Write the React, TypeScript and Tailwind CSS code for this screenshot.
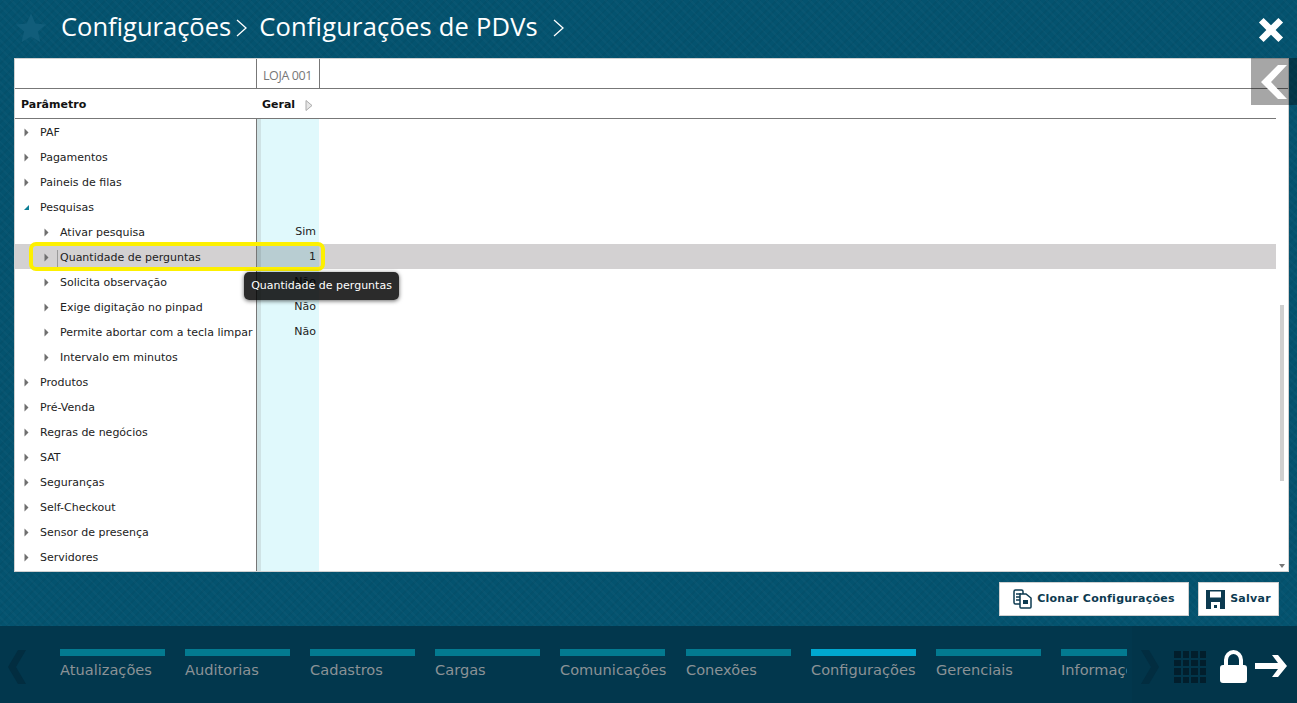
import React from 'react';

const pattern =
  'bg-[#04536f] bg-[repeating-linear-gradient(45deg,rgba(255,255,255,0.02)_0_2px,transparent_2px_6px),repeating-linear-gradient(-45deg,rgba(0,0,0,0.04)_0_2px,transparent_2px_6px)]';

type Row = { label: string; level: number; open?: boolean; value?: string; selected?: boolean };

const rows: Row[] = [
  { label: 'PAF', level: 0 },
  { label: 'Pagamentos', level: 0 },
  { label: 'Paineis de filas', level: 0 },
  { label: 'Pesquisas', level: 0, open: true },
  { label: 'Ativar pesquisa', level: 1, value: 'Sim' },
  { label: 'Quantidade de perguntas', level: 1, value: '1', selected: true },
  { label: 'Solicita observação', level: 1, value: 'Não' },
  { label: 'Exige digitação no pinpad', level: 1, value: 'Não' },
  { label: 'Permite abortar com a tecla limpar', level: 1, value: 'Não' },
  { label: 'Intervalo em minutos', level: 1 },
  { label: 'Produtos', level: 0 },
  { label: 'Pré-Venda', level: 0 },
  { label: 'Regras de negócios', level: 0 },
  { label: 'SAT', level: 0 },
  { label: 'Seguranças', level: 0 },
  { label: 'Self-Checkout', level: 0 },
  { label: 'Sensor de presença', level: 0 },
  { label: 'Servidores', level: 0 },
];

const navItems = [
  'Atualizações',
  'Auditorias',
  'Cadastros',
  'Cargas',
  'Comunicações',
  'Conexões',
  'Configurações',
  'Gerenciais',
];

const Caret = ({ open }: { open?: boolean }) =>
  open ? (
    <svg width="7" height="7" viewBox="0 0 7 7" className="shrink-0">
      <path d="M6 1v5H1z" fill="#0b7f96" />
    </svg>
  ) : (
    <svg width="7" height="9" viewBox="0 0 7 9" className="shrink-0">
      <path d="M1.5 0.5l4 4-4 4z" fill="#6f6f6f" />
    </svg>
  );

const TreeRow = ({ row }: { row: Row }) => (
  <div className={`flex h-[25px] w-[1261px] items-center ${row.selected ? 'bg-[#d3d1d2]' : ''}`}>
    <div
      className={`flex w-[241px] shrink-0 items-center overflow-hidden whitespace-nowrap ${
        row.level === 1 ? 'pl-[28px]' : 'pl-[8px]'
      }`}
    >
      <div className="mt-[2px] flex w-[17px] shrink-0 items-center">
        <Caret open={row.open} />
      </div>
      <span className={`mt-[4px] ${row.selected ? 'border-l border-[#9a9a9a] pl-[2px] -ml-[3px]' : ''}`}>{row.label}</span>
    </div>
    <div className={`h-full w-[5px] shrink-0 border-l border-[#777] ${row.selected ? 'bg-[#a9bcc0]' : 'bg-[#cfe3e5]'}`} />
    <div
      className={`flex h-full w-[58px] shrink-0 items-center justify-end pr-[3px] pt-[2px] ${
        row.selected ? 'bg-[#b8cdd2]' : 'bg-[#e0f9fc]'
      }`}
    >
      {row.value}
    </div>
  </div>
);

export default function App() {
  return (
    <div className={`flex h-[703px] w-[1297px] flex-col overflow-hidden font-['Open_Sans',sans-serif] ${pattern}`}>
      {/* Title */}
      <header className="relative flex h-[58px] shrink-0 items-center pb-[2px]">
        <svg width="32" height="32" viewBox="0 0 24 24" className="ml-[15px] shrink-0" fill="#115d7a">
          <path d="M12 1l3.2 7.600 8.200.7-6.200 5.400 1.900 8L12 18.400 4.900 22.700l1.900-8L.6 9.300l8.200-.7z" />
        </svg>
        <span className="mb-[2px] ml-[14px] text-[25.5px] leading-none text-white">Configurações</span>
        <svg width="14" height="20" viewBox="0 0 14 20" className="ml-[4px]" fill="none" stroke="#fff" strokeWidth="1.300">
          <path d="M2 2l9 8-9 8" />
        </svg>
        <span className="mb-[2px] ml-[10px] text-[25.5px] leading-none tracking-[0.2px] text-white">Configurações de PDVs</span>
        <svg width="14" height="20" viewBox="0 0 14 20" className="ml-[14px]" fill="none" stroke="#fff" strokeWidth="1.300">
          <path d="M2 2l9 8-9 8" />
        </svg>
        <svg width="26" height="26" viewBox="0 0 28 28" className="absolute right-[13px] top-[17px]" fill="#fff">
          <path d="M6 1l8 8 8-8 5 5-8 8 8 8-5 5-8-8-8 8-5-5 8-8-8-8z" />
        </svg>
      </header>

      {/* Table panel */}
      <main className="relative mx-[14px] h-[514px] w-[1275px] shrink-0 overflow-hidden border border-[#d0d0d0] bg-white font-['DejaVu_Sans',sans-serif] text-[11px] text-[#222]">
        <div className="flex h-[30px] border-b border-[#777]">
          <div className="w-[242px] shrink-0 border-r border-[#777]" />
          <div className="flex w-[63px] shrink-0 items-center justify-center border-r border-[#777] pr-[1px] pt-[5px] font-['Open_Sans',sans-serif] text-[12.5px] tracking-[-0.4px] text-[#777]">
            LOJA 001
          </div>
        </div>
        <div className="flex h-[30px] w-[1261px] items-center border-b border-[#777] pt-[3px] font-bold text-[#111]">
          <div className="w-[241px] shrink-0 pl-[6px]">Parâmetro</div>
          <div className="flex items-center pl-[6px]">
            Geral
            <svg width="8" height="11" viewBox="0 0 8 11" className="ml-[10px]">
              <path d="M1 .5l6 5-6 5z" fill="#e6e6e6" stroke="#aaa" />
            </svg>
          </div>
        </div>
        <div className="flex flex-col">
          {rows.map((row) => (
            <TreeRow key={row.label} row={row} />
          ))}
          <div className="flex h-[4px] w-[1261px]">
            <div className="w-[241px] shrink-0" />
            <div className="w-[5px] shrink-0 border-l border-[#777] bg-[#cfe3e5]" />
            <div className="w-[58px] shrink-0 bg-[#e0f9fc]" />
          </div>
        </div>

        {/* scrollbar */}
        <div className="absolute right-[4px] top-[246px] h-[176px] w-[4px] bg-[#cfcfcf]" />
        <div className="absolute right-[3px] top-[505px] h-0 w-0 border-x-[3px] border-t-[4px] border-x-transparent border-t-[#777]" />

        {/* highlight + tooltip */}
        <div className="absolute left-[14px] top-[183px] h-[29px] w-[296px] rounded-[7px] border-4 border-[#fdf000]" />
        <div className="absolute left-[229px] top-[213px] flex h-[28px] w-[155px] items-center justify-center rounded-[5px] bg-black/83 text-white shadow-[0_1px_4px_rgba(0,0,0,0.6)]">
          Quantidade de perguntas
        </div>
      </main>

      {/* Side toggle */}
      <div className="absolute left-[1251px] top-[58px] flex h-[47px] w-[46px] bg-black/35">
        <div className="flex h-full w-[38px] items-center justify-end pr-[2px]">
          <svg width="26" height="34" viewBox="0 0 26 34" fill="#fff">
            <path d="M17 0h9L10 17l16 17h-9L0 17z" />
          </svg>
        </div>
      </div>

      {/* Actions */}
      <div className="flex h-[54px] shrink-0 items-center justify-end gap-[9px] pr-[18px] font-['DejaVu_Sans',sans-serif] text-[11px] font-bold tracking-[0.25px] text-[#0c3a50]">
        <button className="flex h-[34px] w-[190px] items-center justify-center gap-[5px] border border-[#d0d0d0] bg-white">
          <svg width="19" height="20" viewBox="0 0 19 20" fill="none" stroke="#0c3a50" strokeWidth="1.500">
            <rect x="1" y="1" width="9" height="14" rx="1.500" />
            <path d="M3 5h5M3 8h5M3 11h5" />
            <path d="M7 5h6l5 4v9a1 1 0 0 1-1 1H8a1 1 0 0 1-1-1z" fill="#fff" />
            <path d="M10 11h5v4h-5z" fill="#0c3a50" stroke="none" />
          </svg>
          Clonar Configurações
        </button>
        <button className="flex h-[34px] w-[81px] items-center justify-center gap-[5px] border border-[#d0d0d0] bg-white">
          <svg width="19" height="19" viewBox="0 0 19 19" fill="#0c3a50">
            <path d="M0 0h19v19H0z" />
            <path d="M4 1.500h11v6H4z" fill="#fff" />
            <path d="M5 12h9v7H5z" fill="#fff" />
            <path d="M8 15h3v3H8z" fill="#0c3a50" />
          </svg>
          Salvar
        </button>
      </div>

      {/* Bottom menu */}
      <nav className="flex h-[77px] shrink-0 bg-[#02374d] font-['DejaVu_Sans',sans-serif] text-[14.6px] text-[#8b9296]">
        <div className="flex w-[60px] shrink-0 items-start pl-[8px] pt-[24px]">
          <svg width="18" height="34" viewBox="0 0 18 34" fill="#022d40">
            <path d="M10 0h8L8 17l10 17h-8L0 17z" />
          </svg>
        </div>
        <div className="flex w-[1072px] shrink-0 gap-[20px] overflow-hidden pt-[23px]">
          {navItems.map((item) => (
            <div key={item} className={`w-[105px] shrink-0 ${item === 'Comunicações' ? 'mr-[1px]' : ''}`}>
              <div className={`h-[7px] ${item === 'Configurações' ? 'bg-[#00a8d0]' : 'bg-[#037a90]'}`} />
              <div className="mt-[3px] whitespace-nowrap">{item}</div>
            </div>
          ))}
          <div className="w-[66px] shrink-0 overflow-hidden">
            <div className="h-[7px] bg-[#037a90]" />
            <div className="mt-[3px] whitespace-nowrap">Informações</div>
          </div>
        </div>
        <div className="flex flex-1 items-start bg-[#02354a] pt-[23px]">
          <svg width="18" height="34" viewBox="0 0 18 34" fill="#022d40" className="ml-[9px] mt-[1px] shrink-0">
            <path d="M0 0h8l10 17L8 34H0l10-17z" />
          </svg>
          <div className="ml-[15px] mt-[2px] grid shrink-0 grid-cols-4 gap-[2px]">
            {Array.from({ length: 16 }).map((_, i) => (
              <div key={i} className="h-[6.5px] w-[6.5px] bg-[#021e2c]" />
            ))}
          </div>
          <svg width="27" height="33" viewBox="0 0 27 33" fill="#fff" className="ml-[14px] mt-[1px] shrink-0">
            <path fillRule="evenodd" d="M4 15V10a9.500 10 0 0 1 19 0v5h1a3 3 0 0 1 3 3v12a3 3 0 0 1-3 3H3a3 3 0 0 1-3-3V18a3 3 0 0 1 3-3zm4 0h11V10a5.500 6 0 0 0-11 0z" />
          </svg>
          <svg width="32" height="22" viewBox="0 0 32 22" fill="#fff" className="ml-[8px] mt-[6px] shrink-0">
            <path d="M17 0h6l9 11-9 11h-6l6-8H0V8h23z" />
          </svg>
        </div>
      </nav>
    </div>
  );
}
